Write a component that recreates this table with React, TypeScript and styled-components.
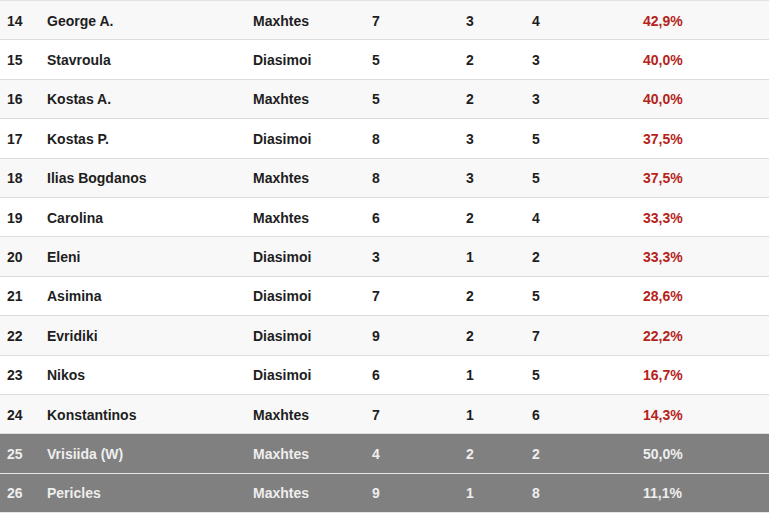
import styled, { createGlobalStyle } from "styled-components";

type Player = {
  rank: number;
  name: string;
  team: string;
  played: number;
  won: number;
  lost: number;
  pct: string;
  out?: boolean;
};

const players: Player[] = [
  { rank: 14, name: "George A.", team: "Maxhtes", played: 7, won: 3, lost: 4, pct: "42,9%" },
  { rank: 15, name: "Stavroula", team: "Diasimoi", played: 5, won: 2, lost: 3, pct: "40,0%" },
  { rank: 16, name: "Kostas A.", team: "Maxhtes", played: 5, won: 2, lost: 3, pct: "40,0%" },
  { rank: 17, name: "Kostas P.", team: "Diasimoi", played: 8, won: 3, lost: 5, pct: "37,5%" },
  { rank: 18, name: "Ilias Bogdanos", team: "Maxhtes", played: 8, won: 3, lost: 5, pct: "37,5%" },
  { rank: 19, name: "Carolina", team: "Maxhtes", played: 6, won: 2, lost: 4, pct: "33,3%" },
  { rank: 20, name: "Eleni", team: "Diasimoi", played: 3, won: 1, lost: 2, pct: "33,3%" },
  { rank: 21, name: "Asimina", team: "Diasimoi", played: 7, won: 2, lost: 5, pct: "28,6%" },
  { rank: 22, name: "Evridiki", team: "Diasimoi", played: 9, won: 2, lost: 7, pct: "22,2%" },
  { rank: 23, name: "Nikos", team: "Diasimoi", played: 6, won: 1, lost: 5, pct: "16,7%" },
  { rank: 24, name: "Konstantinos", team: "Maxhtes", played: 7, won: 1, lost: 6, pct: "14,3%" },
  { rank: 25, name: "Vrisiida (W)", team: "Maxhtes", played: 4, won: 2, lost: 2, pct: "50,0%", out: true },
  { rank: 26, name: "Pericles", team: "Maxhtes", played: 9, won: 1, lost: 8, pct: "11,1%", out: true },
];

const GlobalStyle = createGlobalStyle`
  body {
    margin: 0;
    background: #fff;
    font-family: "Liberation Sans", Arial, sans-serif;
  }
`;

const Table = styled.div`
  width: 769px;
  border-top: 1px solid #e2e2e2;
`;

const Row = styled.div<{ $striped: boolean; $out?: boolean }>`
  display: grid;
  grid-template-columns: 40px 206px 119px 94px 66px 111px 133px;
  align-items: center;
  box-sizing: border-box;
  height: 39.4px;
  padding-top: 1px;
  border-bottom: 1px solid ${(p) => (p.$out ? "#e6e6e6" : "#dcdcdc")};
  background: ${(p) => (p.$out ? "#808080" : p.$striped ? "#f8f8f8" : "#fff")};
  color: ${(p) => (p.$out ? "#eeeeee" : "#1e1e1e")};
  font-size: 14px;
  font-weight: bold;
`;

const Cell = styled.div`
  padding-left: 7px;
  white-space: nowrap;
`;

const Pct = styled(Cell)<{ $out?: boolean }>`
  color: ${(p) => (p.$out ? "#eeeeee" : "#b5231a")};
`;

export default function App() {
  return (
    <>
      <GlobalStyle />
      <Table>
        {players.map((p, i) => (
          <Row key={p.rank} $striped={i % 2 === 0} $out={p.out}>
            <Cell>{p.rank}</Cell>
            <Cell>{p.name}</Cell>
            <Cell>{p.team}</Cell>
            <Cell>{p.played}</Cell>
            <Cell>{p.won}</Cell>
            <Cell>{p.lost}</Cell>
            <Pct $out={p.out}>{p.pct}</Pct>
          </Row>
        ))}
      </Table>
    </>
  );
}
